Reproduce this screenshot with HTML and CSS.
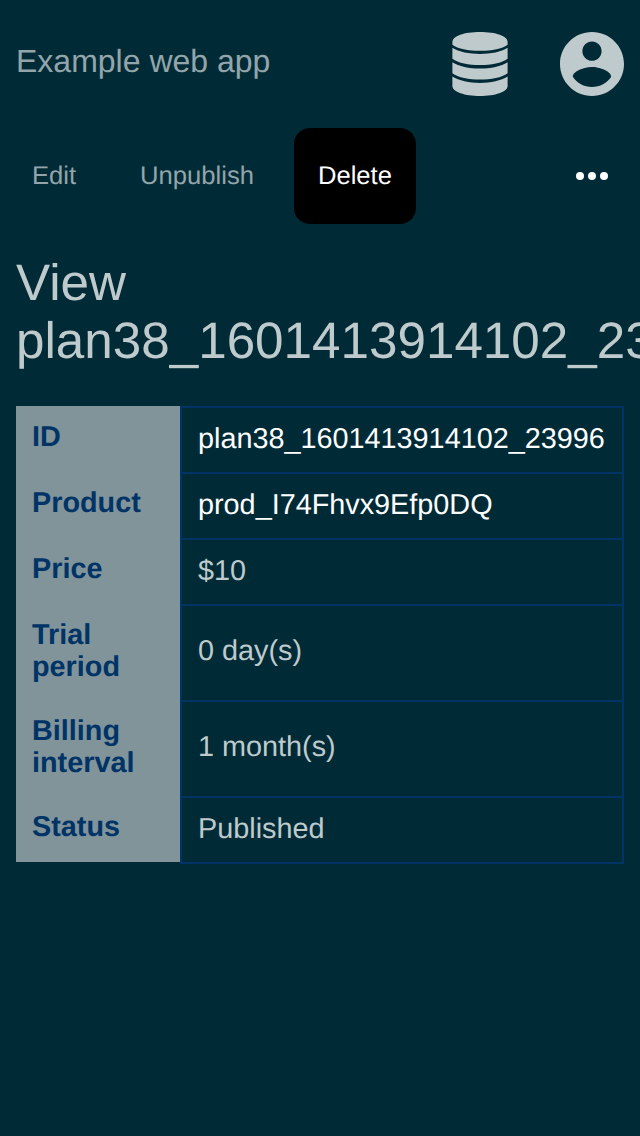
FILE: index.html
```html
<!DOCTYPE html>
<html lang="en">
<head>
<meta charset="utf-8">
<title>Example web app</title>
<link rel="stylesheet" href="styles.css">
</head>
<body>
<header class="header">
  <a class="brand">Example web app</a>
  <div class="header-icons">
    <svg class="icon-database" viewBox="0 0 56 64"><path d="M.4 10C.4 4 12 0 28 0S55.6 4 55.6 10V12.8C50 16.8 40 18.8 28 18.8S6 16.8.4 12.8Z"/><path d="M.4 15.8C7 20 17 22 28 22S49 20 55.6 15.8V26.7C50 31 39 33 28 33S6 31 .4 26.7Z"/><path d="M.4 30.2C7 34.4 17 36.6 28 36.6S49 34.4 55.6 30.2V41.2C50 45.5 39 47.6 28 47.6S6 45.5.4 41.2Z"/><path d="M.4 44.6C7 48.8 17 50.9 28 50.9S49 48.8 55.6 44.6V54C55.6 60 43 64 28 64S.4 60 .4 54Z"/></svg>
    <svg class="icon-account" viewBox="2 2 20 20"><path d="M12 2C6.48 2 2 6.48 2 12s4.48 10 10 10 10-4.48 10-10S17.52 2 12 2zm0 3c1.66 0 3 1.34 3 3s-1.34 3-3 3-3-1.34-3-3 1.34-3 3-3zm0 14.2c-2.5 0-4.71-1.28-6-3.22.03-1.99 4-3.08 6-3.08 1.99 0 5.97 1.09 6 3.08-1.29 1.94-3.5 3.22-6 3.22z"/></svg>
  </div>
</header>
<nav class="nav">
  <a class="nav-item">Edit</a>
  <a class="nav-item">Unpublish</a>
  <a class="nav-item nav-item-active">Delete</a>
  <svg class="nav-more" viewBox="0 0 32 8"><circle cx="4" cy="4" r="4"/><circle cx="16" cy="4" r="4"/><circle cx="28" cy="4" r="4"/></svg>
</nav>
<main class="content">
  <h1 class="title">View plan38_1601413914102_23996</h1>
  <dl class="details">
    <dt class="label">ID</dt><dd class="value value-link">plan38_1601413914102_23996</dd>
    <dt class="label">Product</dt><dd class="value value-link">prod_I74Fhvx9Efp0DQ</dd>
    <dt class="label">Price</dt><dd class="value">$10</dd>
    <dt class="label">Trial period</dt><dd class="value value-tall">0 day(s)</dd>
    <dt class="label">Billing interval</dt><dd class="value value-tall">1 month(s)</dd>
    <dt class="label">Status</dt><dd class="value">Published</dd>
  </dl>
</main>
</body>
</html>
```
FILE: styles.css
```css
* {
  box-sizing: border-box;
}

body {
  margin: 0;
  min-height: 100vh;
  overflow: hidden;
  background: #002b36;
  color: #bfcacd;
  font-family: "Liberation Sans", Arial, sans-serif;
  text-rendering: geometricPrecision;
}

.header {
  display: flex;
  justify-content: space-between;
  height: 128px;
  padding: 32px 16px;
}

.brand {
  color: #93a5aa;
  font-size: 32px;
  line-height: 58px;
}

.header-icons {
  display: flex;
  gap: 52px;
  fill: #bfcacd;
}

.icon-database {
  width: 56px;
  height: 64px;
}

.icon-account {
  width: 64px;
  height: 64px;
}

.nav {
  display: flex;
  align-items: center;
  gap: 16px;
  height: 96px;
  padding: 0 32px 0 8px;
}

.nav-item {
  padding: 0 24px;
  border-radius: 16px;
  color: #93a5aa;
  font-size: 25.6px;
  line-height: 96px;
}

.nav-item-active {
  background: #000;
  color: #fff;
}

.nav-more {
  width: 32px;
  height: 8px;
  margin-left: auto;
  fill: #fff;
}

.content {
  padding: 30px 16px 0;
}

.title {
  margin: 0;
  font-size: 51.2px;
  font-weight: 400;
  line-height: 58px;
}

.details {
  display: grid;
  grid-template-columns: 164px 444px;
  margin: 36px 0 0;
  font-size: 28.8px;
  line-height: 32px;
}

.label {
  min-height: 66px;
  padding: 15px 16px 17px;
  background: #80949a;
  color: #003366;
  font-weight: 700;
}

.value {
  display: flex;
  align-items: center;
  margin: 0 0 -2px;
  padding: 0 16px 2px;
  border: 2px solid #003366;
}

.value-tall {
  padding-bottom: 4px;
}

.value-link {
  color: #fff;
}
```
